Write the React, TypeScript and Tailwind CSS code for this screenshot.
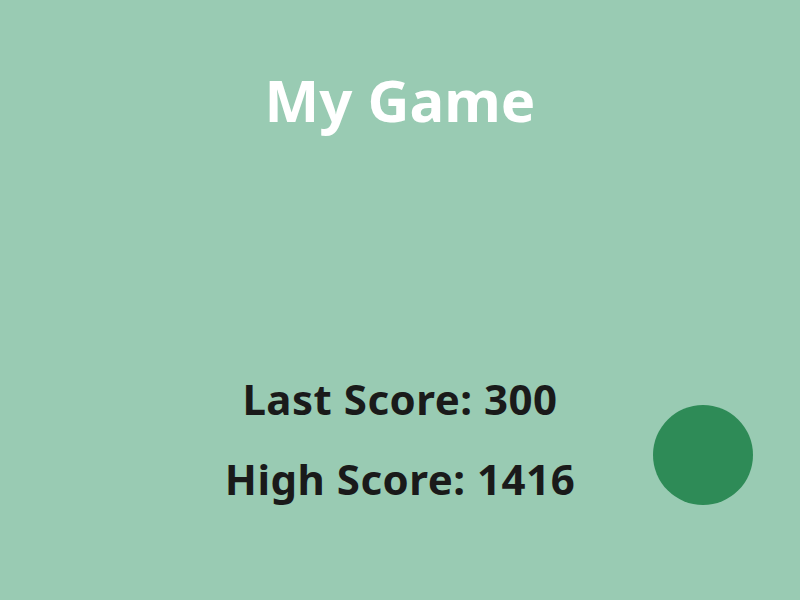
import React from 'react';

const App: React.FC = () => {
  return (
    <div className="relative h-[600px] w-[800px] bg-[#99cbb3] overflow-hidden flex flex-col items-center font-['Noto_Sans',sans-serif] font-bold">
      <h1 className="mt-[60px] text-[58px] leading-[80px] text-white">My Game</h1>
      <div className="mt-[235px] flex flex-col items-center gap-[32px] text-[#1a1a1a] tracking-[0.5px]">
        <p className="text-[42px] leading-[48px]">Last Score: 300</p>
        <p className="text-[42px] leading-[48px]">High Score: 1416</p>
      </div>
      {/* player ball */}
      <div className="absolute left-[653px] top-[405px] h-[100px] w-[100px] rounded-full bg-[#2e8b57]" />
    </div>
  );
};

export default App;
